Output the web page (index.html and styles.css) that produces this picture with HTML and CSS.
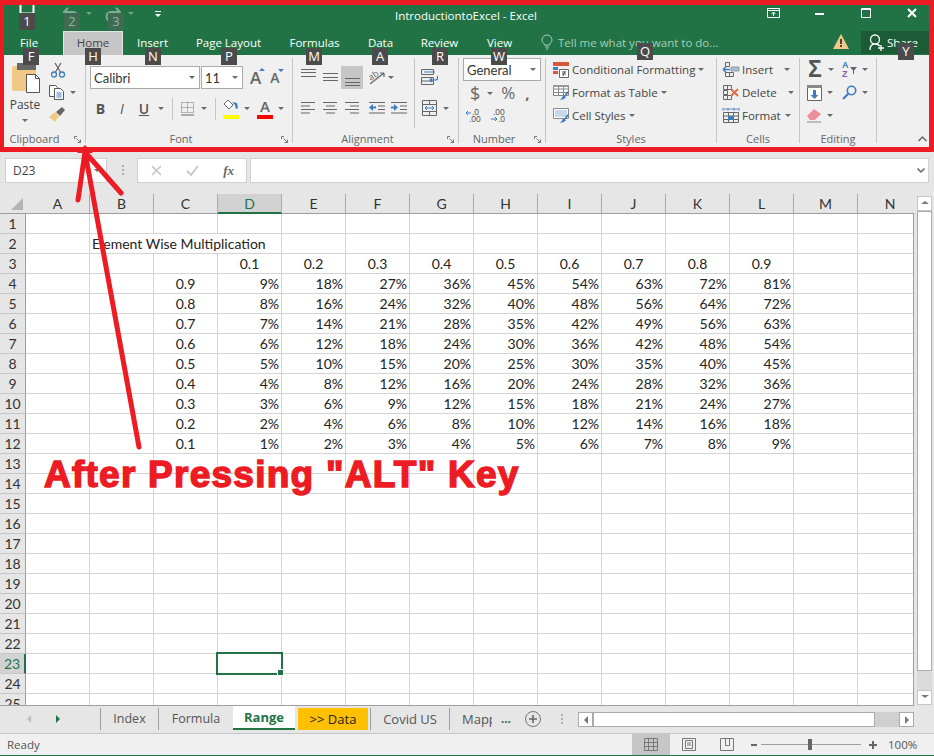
FILE: index.html
```html
<!DOCTYPE html>
<html lang="en">
<head>
	<meta charset="utf-8" />
	<title>IntroductiontoExcel - Excel</title>
	<link rel="stylesheet" href="styles.css">
</head>
<body>
<div class="window">

	<div class="titlebar">
		<div class="qat">
			<svg class="qat-save" width="16" height="10" viewBox="0 0 16 10"><path d="M1.5 0v8.5h13V0" fill="none" stroke="#fff" stroke-width="2"/></svg>
			<svg class="qat-undo" width="16" height="16" viewBox="0 0 16 16"><path d="M5 1 1 5l4 4M1.5 5H10a4.5 4.5 0 0 1 0 9H7" fill="none" stroke="#7fae95" stroke-width="2"/></svg>
			<span class="caret caret-dim"></span>
			<svg class="qat-redo" width="16" height="16" viewBox="0 0 16 16"><path d="m11 1 4 4-4 4M14.5 5H6a4.5 4.5 0 0 0 0 9h3" fill="none" stroke="#7fae95" stroke-width="2"/></svg>
			<span class="caret caret-dim"></span>
			<svg class="qat-more" width="8" height="8" viewBox="0 0 8 8"><path d="M1 1h6v1H1zM1 4h6L4 7z" fill="#fff"/></svg>
		</div>
		<div class="doc-title">IntroductiontoExcel - Excel</div>
		<div class="win-buttons">
			<svg class="win-ribbon" width="13" height="10" viewBox="0 0 13 10"><path d="M.5.5h12v9H.5zM.5 2.5h12M6.5 8V4M4.5 6l2-2 2 2" fill="none" stroke="#fff"/></svg>
			<svg class="win-min" width="9" height="2" viewBox="0 0 9 2"><path d="M0 0h9v2H0z" fill="#fff"/></svg>
			<svg class="win-max" width="10" height="10" viewBox="0 0 10 10"><path d="M.5.5h9v9h-9zM0 1.5h10" fill="none" stroke="#fff"/></svg>
			<svg class="win-close" width="10" height="10" viewBox="0 0 10 10"><path d="m1 1 8 8M9 1 1 9" fill="none" stroke="#fff" stroke-width="2"/></svg>
		</div>
	</div>

	<div class="tabbar">
		<div class="tab tab-file">File</div>
		<div class="tab tab-home">Home</div>
		<div class="tab tab-insert">Insert</div>
		<div class="tab tab-layout">Page Layout</div>
		<div class="tab tab-formulas">Formulas</div>
		<div class="tab tab-data">Data</div>
		<div class="tab tab-review">Review</div>
		<div class="tab tab-view">View</div>
		<div class="tell-me">
			<svg width="12" height="15" viewBox="0 0 12 15"><path d="M3.5 10C3 8 1 7 1 5a5 5 0 0 1 10 0c0 2-2 3-2.5 5zM4 12h4M5 14h2" fill="none" stroke="#a9cdb8"/></svg>
			<span>Tell me what you want to do...</span>
		</div>
		<svg class="warn" width="16" height="15" viewBox="0 0 16 15"><path d="M8 0 16 15H0z" fill="#f0c987"/><path d="M7 5h2v5H7zM7 11h2v2H7z" fill="#444"/></svg>
		<div class="share">
			<svg width="17" height="17" viewBox="0 0 17 17"><path d="M2 16c0-4 2-6 5-6s4 1 5 2M7 10a4 4 0 1 0 0-9 4 4 0 0 0 0 9zM10 14h6M13 11v6" fill="none" stroke="#fff" stroke-width="1.3"/></svg>
			<span>Share</span>
		</div>
	</div>

	<div class="ribbon">

		<div class="group group-clipboard">
			<div class="group-body clipboard-body">
				<div class="paste">
					<svg width="30" height="30" viewBox="0 0 30 30"><rect x="1" y="3" width="24" height="25" rx="2" fill="#f0c987"/><rect x="6" y="0" width="19" height="7" fill="#666"/><path d="M15.5 11.5h9l4 4v14h-13z" fill="#fff" stroke="#555"/><path d="M24.5 11.5v4h4" fill="none" stroke="#555"/></svg>
					<span class="paste-label">Paste</span>
					<span class="caret"></span>
				</div>
				<div class="clip-tools">
					<svg width="16" height="16" viewBox="0 0 16 16"><path d="M5 1l5.500 9M11 1 5.500 10" stroke="#666" stroke-width="1.3" fill="none"/><circle cx="4" cy="12.5" r="2.5" fill="none" stroke="#3f7cbf" stroke-width="1.3"/><circle cx="12" cy="12.5" r="2.5" fill="none" stroke="#3f7cbf" stroke-width="1.3"/></svg>
					<div class="clip-copy">
						<svg width="16" height="15" viewBox="0 0 16 15"><path d="M.5.5h6l2 2v9h-8z" fill="#fff" stroke="#555"/><path d="M5.5 3.5h6l3 3v8h-9z" fill="#fff" stroke="#555"/><path d="M7.5 8h5M7.5 10h5M7.5 12h5" stroke="#3f7cbf"/></svg>
						<span class="caret"></span>
					</div>
					<svg width="16" height="15" viewBox="0 0 16 15"><path d="M0 10 6 5l4 4-4 6z" fill="#f0c987"/><path d="m7 5 6-5 3 3-5 6z" fill="#666"/></svg>
				</div>
			</div>
			<div class="group-label">Clipboard<svg class="launcher" width="7" height="7" viewBox="0 0 7 7"><path d="M.5 3V.5H3M6.5 6.5l-4-4M6.5 3.5v3h-3" fill="none" stroke="#777"/></svg></div>
		</div>

		<div class="group group-font">
			<div class="group-body">
				<div class="font-row">
					<div class="combo combo-font">Calibri<span class="caret"></span></div>
					<div class="combo combo-size">11<span class="caret"></span></div>
					<div class="grow-a">A<i class="tri-up"></i></div>
					<div class="shrink-a">A<i class="tri-down"></i></div>
				</div>
				<div class="font-row font-row-2">
					<span class="fmt fmt-b">B</span>
					<span class="fmt fmt-i">I</span>
					<span class="fmt fmt-u">U</span>
					<span class="caret caret-u"></span>
					<span class="vsep sep-a"></span>
					<svg class="ic-border" width="13" height="14" viewBox="0 0 13 14"><path d="M.5.5h12v10H.5zM6.5.5v10M.5 5.5h12" fill="none" stroke="#777" stroke-dasharray="1 1"/><path d="M0 13h13" stroke="#666"/></svg>
					<span class="caret caret-bd"></span>
					<span class="vsep sep-b"></span>
					<div class="color-btn color-fill">
						<svg width="16" height="14" viewBox="0 0 16 14"><path d="m5 1 5 5-4 4-5-5z" fill="#fff" stroke="#666"/><path d="m9 3 5 1 1 5-2 1-1-4z" fill="#3f7cbf"/></svg>
						<i class="bar bar-yellow"></i>
					</div>
					<span class="caret caret-fill"></span>
					<div class="color-btn color-font">
						<span class="color-a">A</span>
						<i class="bar bar-red"></i>
					</div>
					<span class="caret caret-col"></span>
				</div>
			</div>
			<div class="group-label">Font<svg class="launcher" width="7" height="7" viewBox="0 0 7 7"><path d="M.5 3V.5H3M6.5 6.5l-4-4M6.5 3.5v3h-3" fill="none" stroke="#777"/></svg></div>
		</div>

		<div class="group group-align">
			<div class="group-body align-body">
				<div class="align-left">
					<div class="align-row">
						<span class="slot"><svg width="15" height="23" viewBox="0 0 15 23"><path d="M0 3.5h15M0 6.5h15M0 10.5h15" stroke="#666"/></svg></span>
						<span class="slot"><svg width="15" height="23" viewBox="0 0 15 23"><path d="M0 7.5h15M0 11.5h15M0 14.5h15" stroke="#666"/></svg></span>
						<span class="slot slot-on"><svg width="15" height="23" viewBox="0 0 15 23"><path d="M0 12.5h15M0 16.5h15M0 19.5h15" stroke="#666"/></svg></span>
						<svg class="ic-orient" width="16" height="16" viewBox="0 0 16 16"><path d="M1 14 15 3M15 3h-4M15 3v4" fill="none" stroke="#666" stroke-width="1.2"/><text x="0" y="9" class="orient-text" transform="rotate(-35 4 7)">ab</text></svg>
						<span class="caret caret-orient"></span>
					</div>
					<div class="align-row align-row-2">
						<span class="slot"><svg width="15" height="12" viewBox="0 0 15 12"><path d="M0 .5h14M0 4h9M0 7.5h14M0 11h9" stroke="#666"/></svg></span>
						<span class="slot"><svg width="15" height="12" viewBox="0 0 15 12"><path d="M0 .5h14M3 4h9M0 7.5h14M3 11h9" stroke="#666"/></svg></span>
						<span class="slot"><svg width="15" height="12" viewBox="0 0 15 12"><path d="M0 .5h14M5 4h9M0 7.5h14M5 11h9" stroke="#666"/></svg></span>
						<svg class="ic-indent" width="16" height="12" viewBox="0 0 16 12"><path d="M0 .5h16M9 4h7M9 7.5h7M0 11h16" stroke="#666"/><path d="M0 5.5 4 2v2.5h3v2H4V9z" fill="#3f7cbf"/></svg>
						<svg class="ic-indent" width="16" height="12" viewBox="0 0 16 12"><path d="M0 .5h16M9 4h7M9 7.5h7M0 11h16" stroke="#666"/><path d="M7 5.5 3 2v2.5H0v2h3V9z" fill="#3f7cbf"/></svg>
					</div>
				</div>
				<div class="align-right">
					<svg width="18" height="16" viewBox="0 0 18 16"><path d="M.5.5h12v5H.5zM.5 8.5h12v7H.5zM.5 12h12" fill="#f0f0f0" stroke="#666"/><path d="M3 3h11" stroke="#3f7cbf"/><path d="M16.5 7v2c0 1-1 2-2 2H9M11 9 9 11l2 2" fill="none" stroke="#3f7cbf" stroke-width="1.2"/></svg>
					<div class="merge">
						<svg width="15" height="16" viewBox="0 0 15 16"><path d="M.5.5h14v15H.5zM.5 4.5h14M.5 11.5h14M7.5.5v4M7.5 11.5v4" fill="none" stroke="#666"/><path d="M3 8h9M3 8l2-2M3 8l2 2M12 8l-2-2M12 8l-2 2" fill="none" stroke="#3f7cbf"/></svg>
						<span class="caret"></span>
					</div>
				</div>
			</div>
			<div class="group-label">Alignment<svg class="launcher" width="7" height="7" viewBox="0 0 7 7"><path d="M.5 3V.5H3M6.5 6.5l-4-4M6.5 3.5v3h-3" fill="none" stroke="#777"/></svg></div>
		</div>

		<div class="group group-number">
			<div class="group-body">
				<div class="combo combo-number">General<span class="caret"></span></div>
				<div class="num-row">
					<span class="num-sym num-dollar">$</span>
					<span class="caret caret-dollar"></span>
					<span class="num-sym num-pct">%</span>
					<span class="num-sym num-comma">,</span>
				</div>
				<div class="num-row num-row-3">
					<svg width="15" height="13" viewBox="0 0 15 13"><text x="6" y="6" class="dec-text">.0</text><text x="3" y="12.500" class="dec-text">.00</text><path d="M0 4h5M0 4l2-2M0 4l2 2" fill="none" stroke="#3f7cbf"/></svg>
					<svg class="dec-down" width="15" height="13" viewBox="0 0 15 13"><text x="3" y="6" class="dec-text">.00</text><text x="8" y="12.500" class="dec-text">.0</text><path d="M1 10h6M7 10 5 8M7 10l-2 2" fill="none" stroke="#3f7cbf"/></svg>
				</div>
			</div>
			<div class="group-label">Number<svg class="launcher" width="7" height="7" viewBox="0 0 7 7"><path d="M.5 3V.5H3M6.5 6.5l-4-4M6.5 3.5v3h-3" fill="none" stroke="#777"/></svg></div>
		</div>

		<div class="group group-styles">
			<div class="group-body">
				<div class="rib-row">
					<svg width="16" height="16" viewBox="0 0 16 16"><path d="M0 0h16v4H0z" fill="#d9583b"/><path d="M0 5h5v3H0z" fill="#3f7cbf"/><path d="M0 9h5v3H0z" fill="#d9583b"/><path d="M6.5 7.5h9v8h-9z" fill="#fff" stroke="#666"/><path d="M9 10h4M9 12h4M12 9l-2 5" stroke="#555" fill="none"/></svg>
					<span class="rib-text">Conditional Formatting</span><span class="caret"></span>
				</div>
				<div class="rib-row">
					<svg width="16" height="16" viewBox="0 0 16 16"><path d="M.5.5h15v10H.5zM.5 4h15M.5 7.5h15M5.5.5v10M10.5.5v10" fill="#fff" stroke="#888"/><path d="M0 0h16v2H0z" fill="#999"/><path d="M6 15c3 0 3-4 5-5l2 2c-1 2-4 3-7 3zM12 9l3-3 1 1-3 4z" fill="#3f7cbf"/></svg>
					<span class="rib-text">Format as Table</span><span class="caret"></span>
				</div>
				<div class="rib-row">
					<svg width="16" height="16" viewBox="0 0 16 16"><path d="M.5.5h15v10H.5z" fill="#fff" stroke="#888"/><path d="M2 2h12v7H2z" fill="#c9d8ea"/><path d="M6 15c3 0 3-4 5-5l2 2c-1 2-4 3-7 3zM12 9l3-3 1 1-3 4z" fill="#3f7cbf"/></svg>
					<span class="rib-text">Cell Styles</span><span class="caret"></span>
				</div>
			</div>
			<div class="group-label">Styles</div>
		</div>

		<div class="group group-cells">
			<div class="group-body">
				<div class="rib-row">
					<svg width="16" height="16" viewBox="0 0 16 16"><path d="M2.5.5h4v4h-4zM2.5 10.5h4v4h-4zM6.5 10.5h4v4h-4z" fill="none" stroke="#666"/><path d="M8 5h8v4H8z" fill="#a9c0da" stroke="#666" stroke-width=".5"/><path d="M0 7.5h7M0 7.5l3-3M0 7.5l3 3" fill="none" stroke="#3f7cbf" stroke-width="1.3"/></svg>
					<span class="rib-text">Insert</span><span class="caret caret-insert"></span>
				</div>
				<div class="rib-row">
					<svg width="16" height="16" viewBox="0 0 16 16"><path d="M.5.5h4v4h-4zM4.5.5h4v4h-4zM.5 5.5h4v4h-4zM.5 10.5h4v4h-4zM4.5 10.5h4v4h-4z" fill="none" stroke="#666"/><path d="m8 4 7 7M15 4l-7 7" stroke="#e26b4a" stroke-width="1.8"/></svg>
					<span class="rib-text">Delete</span><span class="caret caret-delete"></span>
				</div>
				<div class="rib-row">
					<svg width="16" height="16" viewBox="0 0 16 16"><path d="M0 1h16M0 0v3M16 0v3M5 0v3M11 0v3" stroke="#3f7cbf" stroke-width=".8"/><path d="M.5 4.5h15v10H.5zM.5 8h15M.5 11.5h15M5.5 4.5v10M10.5 4.5v10" fill="none" stroke="#666"/><path d="M5 8h6v4H5z" fill="#3f7cbf"/></svg>
					<span class="rib-text">Format</span><span class="caret caret-format"></span>
				</div>
			</div>
			<div class="group-label">Cells</div>
		</div>

		<div class="group group-editing">
			<div class="group-body edit-grid">
				<div class="edit-cell"><span class="sigma">Σ</span><span class="caret"></span></div>
				<div class="edit-cell"><svg width="15" height="18" viewBox="0 0 15 18"><text x="0" y="7" class="sort-a">A</text><text x="0" y="16" class="sort-z">Z</text><path d="M8 6h7l-3 3.5V13h-1V9.5z" fill="#666"/></svg><span class="caret"></span></div>
				<div class="edit-cell"><svg width="15" height="16" viewBox="0 0 15 16"><path d="M.5.5h14v15H.5z" fill="#fff" stroke="#666"/><path d="M0 0h15v3H0z" fill="#888"/><path d="M6 5h3v5h2.5l-4 4-4-4H6z" fill="#3f7cbf"/></svg><span class="caret"></span></div>
				<div class="edit-cell"><svg width="15" height="16" viewBox="0 0 15 16"><circle cx="9.5" cy="5.5" r="4.200" fill="none" stroke="#3f7cbf" stroke-width="1.6"/><path d="M6.5 8.5 1 14" stroke="#3f7cbf" stroke-width="2.2"/></svg><span class="caret"></span></div>
				<div class="edit-cell"><svg width="15" height="15" viewBox="0 0 15 15"><path d="m0 8 7-7 7 5-6 6H3z" fill="#ec8f9a"/><path d="M0 14h14" stroke="#888"/></svg><span class="caret"></span></div>
			</div>
			<div class="group-label">Editing</div>
		</div>

		<svg class="collapse" width="9" height="6" viewBox="0 0 9 6"><path d="m.5 5 4-4 4 4" fill="none" stroke="#666" stroke-width="1.5"/></svg>
	</div>

	<div class="formula-bar">
		<div class="name-box">D23<span class="caret"></span></div>
		<div class="fb-dots"></div>
		<div class="fb-buttons">
			<svg width="11" height="11" viewBox="0 0 11 11"><path d="m1 1 9 9M10 1l-9 9" stroke="#c4c4c4" stroke-width="1.5"/></svg>
			<svg width="13" height="11" viewBox="0 0 13 11"><path d="m1 6 4 4 7-9" fill="none" stroke="#c4c4c4" stroke-width="1.8"/></svg>
			<span class="fx">fx</span>
		</div>
		<div class="fb-input">
			<svg width="8" height="5" viewBox="0 0 8 5"><path d="m.5.5 3.500 3.500 3.500-3.500" fill="none" stroke="#666" stroke-width="1.5"/></svg>
		</div>
	</div>

	<div class="sheet-area">
		<div class="grid-wrap">
			<table class="grid">
				<tr class="head"><th class="corner"></th><th>A</th><th>B</th><th>C</th><th class="sel-col">D</th><th>E</th><th>F</th><th>G</th><th>H</th><th>I</th><th>J</th><th>K</th><th>L</th><th>M</th><th>N</th></tr>
				<tr><th>1</th><td></td><td></td><td></td><td></td><td></td><td></td><td></td><td></td><td></td><td></td><td></td><td></td><td></td><td></td></tr>
				<tr><th>2</th><td></td><td colspan="3" class="txt">Element Wise Multiplication</td><td></td><td></td><td></td><td></td><td></td><td></td><td></td><td></td><td></td><td></td></tr>
				<tr><th>3</th><td></td><td></td><td></td><td class="ctr">0.1</td><td class="ctr">0.2</td><td class="ctr">0.3</td><td class="ctr">0.4</td><td class="ctr">0.5</td><td class="ctr">0.6</td><td class="ctr">0.7</td><td class="ctr">0.8</td><td class="ctr">0.9</td><td></td><td></td></tr>
				<tr><th>4</th><td></td><td></td><td class="ctr">0.9</td><td>9%</td><td>18%</td><td>27%</td><td>36%</td><td>45%</td><td>54%</td><td>63%</td><td>72%</td><td>81%</td><td></td><td></td></tr>
				<tr><th>5</th><td></td><td></td><td class="ctr">0.8</td><td>8%</td><td>16%</td><td>24%</td><td>32%</td><td>40%</td><td>48%</td><td>56%</td><td>64%</td><td>72%</td><td></td><td></td></tr>
				<tr><th>6</th><td></td><td></td><td class="ctr">0.7</td><td>7%</td><td>14%</td><td>21%</td><td>28%</td><td>35%</td><td>42%</td><td>49%</td><td>56%</td><td>63%</td><td></td><td></td></tr>
				<tr><th>7</th><td></td><td></td><td class="ctr">0.6</td><td>6%</td><td>12%</td><td>18%</td><td>24%</td><td>30%</td><td>36%</td><td>42%</td><td>48%</td><td>54%</td><td></td><td></td></tr>
				<tr><th>8</th><td></td><td></td><td class="ctr">0.5</td><td>5%</td><td>10%</td><td>15%</td><td>20%</td><td>25%</td><td>30%</td><td>35%</td><td>40%</td><td>45%</td><td></td><td></td></tr>
				<tr><th>9</th><td></td><td></td><td class="ctr">0.4</td><td>4%</td><td>8%</td><td>12%</td><td>16%</td><td>20%</td><td>24%</td><td>28%</td><td>32%</td><td>36%</td><td></td><td></td></tr>
				<tr><th>10</th><td></td><td></td><td class="ctr">0.3</td><td>3%</td><td>6%</td><td>9%</td><td>12%</td><td>15%</td><td>18%</td><td>21%</td><td>24%</td><td>27%</td><td></td><td></td></tr>
				<tr><th>11</th><td></td><td></td><td class="ctr">0.2</td><td>2%</td><td>4%</td><td>6%</td><td>8%</td><td>10%</td><td>12%</td><td>14%</td><td>16%</td><td>18%</td><td></td><td></td></tr>
				<tr><th>12</th><td></td><td></td><td class="ctr">0.1</td><td>1%</td><td>2%</td><td>3%</td><td>4%</td><td>5%</td><td>6%</td><td>7%</td><td>8%</td><td>9%</td><td></td><td></td></tr>
				<tr><th>13</th><td></td><td></td><td></td><td></td><td></td><td></td><td></td><td></td><td></td><td></td><td></td><td></td><td></td><td></td></tr>
				<tr><th>14</th><td></td><td></td><td></td><td></td><td></td><td></td><td></td><td></td><td></td><td></td><td></td><td></td><td></td><td></td></tr>
				<tr><th>15</th><td></td><td></td><td></td><td></td><td></td><td></td><td></td><td></td><td></td><td></td><td></td><td></td><td></td><td></td></tr>
				<tr><th>16</th><td></td><td></td><td></td><td></td><td></td><td></td><td></td><td></td><td></td><td></td><td></td><td></td><td></td><td></td></tr>
				<tr><th>17</th><td></td><td></td><td></td><td></td><td></td><td></td><td></td><td></td><td></td><td></td><td></td><td></td><td></td><td></td></tr>
				<tr><th>18</th><td></td><td></td><td></td><td></td><td></td><td></td><td></td><td></td><td></td><td></td><td></td><td></td><td></td><td></td></tr>
				<tr><th>19</th><td></td><td></td><td></td><td></td><td></td><td></td><td></td><td></td><td></td><td></td><td></td><td></td><td></td><td></td></tr>
				<tr><th>20</th><td></td><td></td><td></td><td></td><td></td><td></td><td></td><td></td><td></td><td></td><td></td><td></td><td></td><td></td></tr>
				<tr><th>21</th><td></td><td></td><td></td><td></td><td></td><td></td><td></td><td></td><td></td><td></td><td></td><td></td><td></td><td></td></tr>
				<tr><th>22</th><td></td><td></td><td></td><td></td><td></td><td></td><td></td><td></td><td></td><td></td><td></td><td></td><td></td><td></td></tr>
				<tr><th class="sel-row">23</th><td></td><td></td><td></td><td class="sel"></td><td></td><td></td><td></td><td></td><td></td><td></td><td></td><td></td><td></td><td></td></tr>
				<tr><th>24</th><td></td><td></td><td></td><td></td><td></td><td></td><td></td><td></td><td></td><td></td><td></td><td></td><td></td><td></td></tr>
				<tr><th>25</th><td></td><td></td><td></td><td></td><td></td><td></td><td></td><td></td><td></td><td></td><td></td><td></td><td></td><td></td></tr>
			</table>
		</div>
		<div class="vscroll">
			<div class="sb-btn"><i class="tri-up tri-gray"></i></div>
			<div class="sb-thumb"></div>
			<div class="sb-track"></div>
			<div class="sb-btn"><i class="tri-down tri-gray"></i></div>
		</div>
	</div>

	<div class="sheets">
		<div class="sheet-nav">
			<i class="nav-left"></i>
			<i class="nav-right"></i>
		</div>
		<div class="sheet-tab tab-index">Index</div>
		<div class="sheet-tab tab-formula">Formula</div>
		<div class="sheet-tab tab-range">Range</div>
		<div class="sheet-tab tab-dataset">&gt;&gt; Data</div>
		<div class="sheet-tab tab-covid">Covid US</div>
		<div class="sheet-tab tab-mapp">Mapp</div>
		<div class="more-sheets">...</div>
		<svg class="add-sheet" width="16" height="16" viewBox="0 0 16 16"><circle cx="8" cy="8" r="7.5" fill="none" stroke="#777"/><path d="M8 4v8M4 8h8" stroke="#666" stroke-width="1.6"/></svg>
		<div class="sheets-dots"></div>
		<div class="hscroll">
			<div class="hs-btn"><i class="nav-left nav-gray"></i></div>
			<div class="hs-thumb"></div>
			<div class="hs-track"></div>
			<div class="hs-btn"><i class="nav-right nav-gray"></i></div>
		</div>
	</div>

	<div class="statusbar">
		<span class="ready">Ready</span>
		<div class="view-btn view-on"><svg width="14" height="13" viewBox="0 0 14 13"><path d="M.5.5h13v12H.5zM.5 4.5h13M.5 8.5h13M4.5.5v12M9.5.5v12" fill="none" stroke="#777"/></svg></div>
		<div class="view-btn"><svg width="14" height="13" viewBox="0 0 14 13"><path d="M.5.5h13v12H.5z" fill="none" stroke="#777"/><path d="M3.5 2.5h7v8h-7zM5 5h4M5 7h4" fill="none" stroke="#777"/></svg></div>
		<div class="view-btn"><svg width="14" height="13" viewBox="0 0 14 13"><path d="M.5.5h13v12H.5zM5.500.5v7h4v-7" fill="none" stroke="#777"/></svg></div>
		<div class="zoom-minus"></div>
		<div class="zoom-track"><i class="zoom-thumb"></i></div>
		<svg class="zoom-plus" width="8" height="8" viewBox="0 0 8 8"><path d="M0 3h8v2H0zM3 0h2v8H3z" fill="#666"/></svg>
		<span class="zoom-val">100%</span>
	</div>

	<!-- alt key tips -->
	<span class="keytip k-1">1</span>
	<span class="keytip k-2 dim">2</span>
	<span class="keytip k-3 dim">3</span>
	<span class="keytip k-f">F</span>
	<span class="keytip k-h">H</span>
	<span class="keytip k-n">N</span>
	<span class="keytip k-p">P</span>
	<span class="keytip k-m">M</span>
	<span class="keytip k-a">A</span>
	<span class="keytip k-r">R</span>
	<span class="keytip k-w">W</span>
	<span class="keytip k-q">Q</span>
	<span class="keytip k-y">Y</span>

	<!-- red markup drawn on top of the screenshot -->
	<div class="red-box"></div>
	<svg class="red-arrow" width="934" height="756" viewBox="0 0 934 756"><path d="M85 152 139 447M85 152 78 200M85 152 121 193" fill="none" stroke="#ed1c24" stroke-width="5" stroke-linecap="round"/><path d="M85 145 77 153h16z" fill="#ed1c24"/></svg>
	<div class="red-note">After Pressing "ALT" Key</div>
</div>
</body>
</html>
```
FILE: styles.css
```css
html, body
{
	margin: 0;
	padding: 0;
}

body
{
	width: 934px;
	height: 756px;
	overflow: hidden;
	font-family: "Open Sans", "Noto Sans", sans-serif;
	font-size: 11.5px;
	color: #444;
}

svg
{
	display: block;
	flex: none;
	overflow: visible;
}

.window
{
	position: relative;
	width: 934px;
	height: 756px;
	overflow: hidden;
	background-color: #E6E6E6;
}

.caret
{
	display: inline-block;
	flex: none;
	width: 0;
	height: 0;
	border-left: 3px solid transparent;
	border-right: 3px solid transparent;
	border-top: 3px solid #6A6A6A;
}

/* title bar */

.titlebar
{
	display: flex;
	align-items: flex-start;
	height: 29px;
	background-color: #217346;
	color: #FFF;
}

.qat
{
	display: flex;
	align-items: flex-start;
	width: 395px;
	flex: none;
}

.qat-save
{
	margin: 5px 0 0 19px;
}

.qat-undo
{
	margin: 7px 0 0 28px;
}

.qat-redo
{
	margin: 7px 0 0 13px;
}

.caret-dim
{
	margin: 12px 0 0 7px;
	border-top-color: #6FA487;
}

.qat-more
{
	margin: 10px 0 0 20px;
}

.doc-title
{
	width: 142px;
	margin-top: 7px;
	line-height: 18px;
	white-space: nowrap;
}

.win-buttons
{
	display: flex;
	align-items: flex-start;
}

.win-ribbon
{
	margin: 8px 0 0 230px;
}

.win-min
{
	margin: 13px 0 0 35px;
}

.win-max
{
	margin: 8px 0 0 37px;
}

.win-close
{
	margin: 8px 0 0 36px;
}

/* ribbon tabs */

.tabbar
{
	display: flex;
	height: 26px;
	padding-left: 4px;
	background-color: #217346;
	color: #FFF;
}

.tab
{
	flex: none;
	padding-top: 4px;
	height: 22px;
	line-height: 20px;
	text-align: center;
}

.tab-file { width: 50px; margin-right: 9px; }
.tab-insert { width: 59px; }
.tab-layout { width: 93px; }
.tab-formulas { width: 79px; }
.tab-data { width: 53px; }
.tab-review { width: 65px; }
.tab-view { width: 55px; }

.tab-home
{
	box-sizing: border-box;
	width: 60px;
	margin-top: 2px;
	height: 24px;
	padding-top: 0;
	line-height: 22px;
	color: #444;
	background-color: #C6C6C6;
	border: 1px solid #E4E4E4;
	border-bottom: 0;
}

.tell-me
{
	display: flex;
	align-items: center;
	gap: 5px;
	width: 292px;
	flex: none;
	margin-left: 14px;
	height: 26px;
	color: #A9CDB8;
}

.warn
{
	margin-top: 5px;
}

.share
{
	display: flex;
	align-items: center;
	gap: 2px;
	flex: none;
	box-sizing: border-box;
	width: 68px;
	height: 23px;
	margin: 2px 0 0 12px;
	padding-left: 7px;
	background-color: #1B5C37;
	color: #FFF;
}

/* ribbon */

.ribbon
{
	display: flex;
	height: 89px;
	padding-top: 3px;
	background-color: #F0F0F0;
}

.group
{
	position: relative;
	box-sizing: border-box;
	flex: none;
	height: 85px;
	border-right: 1px solid #C6C6C6;
}

.group-body
{
	display: flow-root;
	box-sizing: border-box;
	height: 73px;
}

.group-label
{
	position: relative;
	box-sizing: border-box;
	height: 12px;
	line-height: 16px;
	text-align: center;
	color: #666;
	font-size: 11px;
}

.launcher
{
	position: absolute;
	right: 4px;
	top: 5px;
}

.group-clipboard { width: 82px; margin-left: 4px; }
.group-font { width: 207px; }
.group-align { width: 166px; }
.group-number { width: 87px; }
.group-styles { width: 171px; }
.group-cells { width: 83px; }
.group-editing { width: 77px; }

.group-clipboard .group-label { padding-right: 20px; }
.group-font .group-label,
.group-align .group-label,
.group-number .group-label { padding-right: 16px; }

.clipboard-body
{
	display: flex;
}

.paste
{
	display: flex;
	flex-direction: column;
	align-items: center;
	width: 42px;
	flex: none;
	padding-top: 5px;
	box-sizing: border-box;
}

.paste svg
{
	margin-right: -2px;
}

.paste-label
{
	margin-top: 3px;
	line-height: 18px;
	font-size: 12px;
}

.paste .caret
{
	margin-top: 5px;
}

.clip-tools
{
	display: flex;
	flex-direction: column;
	gap: 7px;
	padding: 4px 0 0 3px;
}

.clip-copy
{
	display: flex;
	align-items: center;
	gap: 5px;
}

.clip-tools > svg:first-child
{
	margin-left: 1px;
}

/* font group */

.font-row
{
	display: flex;
	align-items: center;
	height: 23px;
	margin: 8px 0 0 4px;
}

.combo
{
	display: flex;
	align-items: center;
	justify-content: space-between;
	box-sizing: border-box;
	height: 23px;
	padding: 0 4px 0 3px;
	background-color: #FFF;
	border: 1px solid #ABABAB;
	font-family: Lato, "Liberation Sans", sans-serif;
	font-size: 13px;
	color: #333;
}

.combo-font
{
	width: 110px;
}

.combo-size
{
	width: 42px;
	margin-left: 1px;
}

.grow-a, .shrink-a
{
	position: relative;
	font-weight: 600;
	color: #666;
}

.grow-a
{
	margin-left: 7px;
	font-size: 17px;
}

.shrink-a
{
	margin-left: 9px;
	font-size: 14px;
}

.tri-up, .tri-down
{
	position: absolute;
	width: 0;
	height: 0;
	border-left: 3px solid transparent;
	border-right: 3px solid transparent;
}

.tri-up
{
	right: -4px;
	top: 2px;
	border-bottom: 3px solid #3F7CBF;
}

.tri-down
{
	right: -4px;
	top: 1px;
	border-top: 3px solid #3F7CBF;
}

.fmt
{
	flex: none;
	width: 22px;
	text-align: center;
	font-size: 14px;
	color: #555;
}

.fmt-b
{
	width: 21px;
	font-weight: 700;
}

.fmt-i
{
	font-style: italic;
}

.fmt-u
{
	font-weight: 600;
	text-decoration: underline;
}

.caret-u { margin-left: 3px; }
.caret-bd { margin-left: 7px; }
.caret-fill { margin-left: 5px; }
.caret-col { margin-left: 5px; }

.vsep
{
	flex: none;
	width: 1px;
	height: 22px;
	background-color: #C6C6C6;
}

.sep-a { margin-left: 8px; }
.sep-b { margin-left: 8px; }

.ic-border
{
	margin-left: 8px;
}

.color-btn
{
	flex: none;
	width: 16px;
	height: 20px;
	position: relative;
}

.color-fill { margin-left: 7px; }
.color-font { margin-left: 7px; }

.color-a
{
	display: block;
	text-align: center;
	line-height: 15px;
	font-size: 15px;
	font-weight: 600;
	color: #666;
}

.bar
{
	position: absolute;
	left: 0;
	bottom: 0;
	width: 16px;
	height: 4px;
}

.bar-yellow { background-color: #FFFF00; }
.bar-red { background-color: #FF0000; }

/* alignment group */

.align-body
{
	display: flex;
	padding-left: 4px;
}

.align-left
{
	box-sizing: border-box;
	width: 118px;
	height: 70px;
	border-right: 1px solid #C6C6C6;
}

.align-row
{
	display: flex;
	align-items: center;
	height: 23px;
	margin-top: 8px;
}

.align-row-2
{
	margin-top: 7px;
}

.slot
{
	display: flex;
	justify-content: center;
	align-items: center;
	width: 22px;
	height: 23px;
	flex: none;
}

.slot-on
{
	background-color: #C6C6C6;
}

.ic-orient
{
	margin-left: 6px;
}

.orient-text
{
	font-size: 9px;
	fill: #666;
}

.caret-orient
{
	margin-left: 3px;
}

.ic-indent
{
	margin-left: 6px;
}

.align-right
{
	display: flex;
	flex-direction: column;
	padding: 11px 0 0 6px;
	gap: 15px;
}

.merge
{
	display: flex;
	align-items: center;
	gap: 6px;
	margin-left: 1px;
}

/* number group */

.group-number .group-body
{
	padding-left: 4px;
}

.combo-number
{
	width: 78px;
}

.num-row
{
	display: flex;
	align-items: center;
	height: 24px;
	padding-left: 7px;
}

.num-sym
{
	font-size: 18px;
	color: #666;
	line-height: 20px;
}

.caret-dollar
{
	margin-left: 7px;
}

.num-pct
{
	margin-left: 8px;
	font-size: 17px;
}

.num-comma
{
	margin-left: 10px;
	font-weight: 700;
	font-size: 15px;
	line-height: 14px;
}

.num-row-3
{
	height: 20px;
	padding-left: 3px;
}

.dec-text
{
	font-family: "Liberation Sans", sans-serif;
	font-size: 8.5px;
	fill: #555;
}

.dec-down
{
	margin-left: 9px;
}

/* styles and cells */

.group-styles .group-body
{
	padding-left: 7px;
}

.group-cells .group-body
{
	padding-left: 6px;
}

.rib-row
{
	display: flex;
	align-items: center;
	height: 23px;
}

.rib-text
{
	margin-left: 3px;
	white-space: nowrap;
	margin-right: 3px;
}

.caret-insert { margin-left: 8px; }
.caret-delete { margin-left: 8px; }
.caret-format { margin-left: 1px; }

/* editing */

.edit-grid
{
	display: grid;
	grid-template-columns: 35px 34px;
	grid-auto-rows: 23px;
	padding-left: 7px;
}

.edit-cell
{
	display: flex;
	align-items: center;
	gap: 5px;
}

.sigma
{
	display: block;
	width: 16px;
	font-size: 23px;
	line-height: 23px;
	font-weight: 700;
	font-family: "Liberation Sans", sans-serif;
	color: #555;
	text-align: center;
}

.sort-a, .sort-z
{
	font-family: "Liberation Sans", sans-serif;
	font-size: 9px;
	font-weight: 700;
}

.sort-a { fill: #3F7CBF; }
.sort-z { fill: #8A5CB0; }

.collapse
{
	align-self: flex-end;
	margin: 0 0 5px 41px;
}

/* formula bar */

.formula-bar
{
	display: flex;
	height: 47px;
	box-sizing: border-box;
	padding: 11px 0 11px 5px;
}

.name-box, .fb-buttons, .fb-input
{
	display: flex;
	align-items: center;
	box-sizing: border-box;
	height: 25px;
	background-color: #FFF;
	border: 1px solid #D0D0D0;
}

.name-box
{
	justify-content: space-between;
	width: 102px;
	padding: 0 6px 0 7px;
	font-size: 12px;
	color: #444;
}

.fb-dots
{
	width: 2px;
	height: 11px;
	margin: 7px 13px 0 15px;
	background: repeating-linear-gradient(#B0B0B0 0 2px, transparent 2px 4px);
}

.fb-buttons
{
	justify-content: space-between;
	width: 110px;
	padding: 0 12px 0 13px;
}

.fx
{
	font-family: "Liberation Serif", serif;
	font-style: italic;
	font-weight: 700;
	font-size: 13px;
	color: #666;
}

.fb-input
{
	justify-content: flex-end;
	width: 679px;
	margin-left: 3px;
	padding-right: 3px;
}

/* sheet grid */

.sheet-area
{
	display: flex;
	height: 512px;
}

.grid-wrap
{
	position: relative;
	box-sizing: border-box;
	width: 914px;
	height: 512px;
	overflow: hidden;
	border-bottom: 1px solid #9E9E9E;
}

.grid-wrap::after
{
	content: "";
	position: absolute;
	right: 0;
	top: 19px;
	bottom: 0;
	width: 1px;
	background-color: #9E9E9E;
}

.grid
{
	table-layout: fixed;
	width: 922px;
	border-collapse: separate;
	border-spacing: 0;
	font-family: Lato, "Liberation Sans", sans-serif;
	font-size: 14px;
	color: #222;
}

.grid tr
{
	height: 20px;
}

.grid th, .grid td
{
	box-sizing: border-box;
	width: 64px;
	height: 20px;
	padding: 0 2px;
	font-weight: 400;
	white-space: nowrap;
	overflow: hidden;
}

.grid td
{
	text-align: right;
	background-color: #FFF;
	border-right: 1px solid #D4D4D4;
	border-bottom: 1px solid #D4D4D4;
	line-height: 19px;
}

.grid td.ctr
{
	text-align: center;
}

.grid td.txt
{
	text-align: left;
}

.grid th
{
	background-color: #E6E6E6;
	color: #333;
	border-right: 1px solid #ABABAB;
	border-bottom: 1px solid #C6C6C6;
	text-align: center;
}

.grid th:first-child
{
	width: 26px;
	padding: 0;
	border-right: 1px solid #9E9E9E;
}

.grid .head th
{
	border-right: 1px solid #ABABAB;
	border-bottom: 1px solid #9E9E9E;
}

.grid .head th:last-child
{
	border-right: 0;
}

.grid .head th.corner
{
	position: relative;
	border-right: 0;
}

.corner::after
{
	content: "";
	position: absolute;
	right: 3px;
	bottom: 3px;
	border-left: 12px solid transparent;
	border-bottom: 12px solid #B4B4B4;
}

.grid .head th.sel-col
{
	background-color: #D2D2D2;
	color: #217346;
	border-bottom: 2px solid #217346;
}

.grid th.sel-row
{
	background-color: #D2D2D2;
	color: #217346;
	border-right: 2px solid #217346;
}

.grid td.sel
{
	position: relative;
	overflow: visible;
}

.sel::before
{
	content: "";
	position: absolute;
	left: -2px;
	top: -2px;
	right: -2px;
	bottom: -2px;
	border: 2px solid #217346;
}

.sel::after
{
	content: "";
	position: absolute;
	right: -3px;
	bottom: -3px;
	width: 5px;
	height: 5px;
	background-color: #217346;
	border: 1px solid #FFF;
	box-sizing: content-box;
}

.vscroll
{
	display: flex;
	flex-direction: column;
	box-sizing: border-box;
	width: 15px;
	height: 509px;
	margin: 2px 0 0 3px;
}

.sb-btn
{
	position: relative;
	box-sizing: border-box;
	height: 15px;
	flex: none;
	background-color: #FFF;
	border: 1px solid #C6C6C6;
}

.tri-gray
{
	left: 3px;
	top: 4px;
	right: auto;
	border-left-width: 4px;
	border-right-width: 4px;
	border-bottom-color: #777;
	border-top-color: #777;
}

.sb-thumb
{
	box-sizing: border-box;
	height: 460px;
	flex: none;
	background-color: #FFF;
	border: 1px solid #ABABAB;
}

.sb-track
{
	flex: 1;
	background-color: #DBDBDB;
}

/* sheet tabs */

.sheets
{
	display: flex;
	align-items: flex-start;
	height: 27px;
	color: #555;
}

.sheet-nav
{
	display: flex;
	align-items: center;
	width: 100px;
	height: 25px;
	flex: none;
	box-sizing: border-box;
	padding-left: 27px;
}

.nav-left, .nav-right
{
	display: block;
	width: 0;
	height: 0;
	border-top: 4px solid transparent;
	border-bottom: 4px solid transparent;
}

.nav-left
{
	border-right: 4px solid #BDBDBD;
}

.nav-right
{
	margin-left: 25px;
	border-left: 4px solid #217346;
}

.hs-btn .nav-gray
{
	margin: 3px auto 0;
	border-right-color: #777;
	border-left-color: #777;
}

.sheet-tab
{
	flex: none;
	box-sizing: border-box;
	height: 22px;
	margin-top: 2px;
	line-height: 22px;
	text-align: center;
	white-space: nowrap;
	overflow: hidden;
	font-size: 12.5px;
	border-left: 1px solid #9E9E9E;
}

.tab-index { width: 58px; }
.tab-formula { width: 75px; }

.tab-range
{
	width: 62px;
	height: 25px;
	margin-top: -1px;
	line-height: 25px;
	font-size: 13px;
	background-color: #FFF;
	border-left: 0;
	border-bottom: 2px solid #217346;
	color: #217346;
	font-weight: 700;
}

.tab-dataset
{
	width: 70px;
	margin: 2px 2px 0 3px;
	font-size: 13px;
	background-color: #FFC000;
	border-left: 0;
	color: #222;
}

.tab-covid
{
	width: 79px;
	font-size: 13px;
}

.tab-mapp
{
	width: 43px;
	padding-left: 12px;
	text-align: left;
	font-size: 13px;
}

.more-sheets
{
	width: 10px;
	margin: 3px 0 0 9px;
	color: #217346;
	font-weight: 700;
	line-height: 20px;
	flex: none;
}

.add-sheet
{
	margin: 5px 0 0 14px;
}

.sheets-dots
{
	width: 2px;
	height: 11px;
	flex: none;
	margin: 8px 0 0 20px;
	background: repeating-linear-gradient(#B0B0B0 0 2px, transparent 2px 4px);
}

.hscroll
{
	display: flex;
	flex: none;
	box-sizing: border-box;
	width: 336px;
	height: 15px;
	margin: 6px 0 0 15px;
}

.hs-btn
{
	box-sizing: border-box;
	flex: none;
	width: 15px;
	height: 15px;
	background-color: #FFF;
	border: 1px solid #ABABAB;
}

.hs-thumb
{
	box-sizing: border-box;
	width: 282px;
	flex: none;
	background-color: #FFF;
	border: 1px solid #ABABAB;
}

.hs-track
{
	flex: 1;
	background-color: #D0D0D0;
}

/* status bar */

.statusbar
{
	display: flex;
	align-items: center;
	box-sizing: border-box;
	height: 23px;
	padding-left: 7px;
	background-color: #F0F0F0;
	border-top: 1px solid #C6C6C6;
	border-bottom: 1px solid #217346;
	color: #555;
}

.ready
{
	width: 625px;
	flex: none;
}

.view-btn
{
	display: flex;
	justify-content: center;
	align-items: center;
	width: 38px;
	height: 21px;
	flex: none;
}

.view-on
{
	background-color: #C6C6C6;
}

.zoom-minus
{
	flex: none;
	width: 6px;
	height: 2px;
	margin-left: 5px;
	background-color: #666;
}

.zoom-track
{
	position: relative;
	flex: none;
	width: 100px;
	height: 1px;
	margin-left: 4px;
	background-color: #A0A0A0;
}

.zoom-thumb
{
	position: absolute;
	left: 47px;
	top: -5px;
	width: 4px;
	height: 11px;
	background-color: #666;
}

.zoom-plus
{
	margin-left: 8px;
}

.zoom-val
{
	margin-left: 11px;
	white-space: nowrap;
}

/* key tips */

.keytip
{
	position: absolute;
	width: 16px;
	height: 17px;
	line-height: 17px;
	text-align: center;
	color: #FFF;
	background-color: #4B4B4B;
	font-size: 13px;
}

.keytip.dim
{
	color: #8FB5A1;
	background-color: #3F6B52;
}

.k-1 { left: 19px; top: 13px; }
.k-2 { left: 64px; top: 13px; }
.k-3 { left: 108px; top: 13px; }
.k-f { left: 23px; top: 48px; }
.k-h { left: 85px; top: 48px; }
.k-n { left: 145px; top: 48px; }
.k-p { left: 221px; top: 48px; }
.k-m { left: 306px; top: 48px; }
.k-a { left: 372px; top: 48px; }
.k-r { left: 432px; top: 48px; }
.k-w { left: 491px; top: 48px; }
.k-q { left: 637px; top: 43px; }
.k-y { left: 898px; top: 43px; }

/* red markup */

.red-box
{
	position: absolute;
	left: 0;
	top: 0;
	box-sizing: border-box;
	width: 934px;
	height: 152px;
	border: 5px solid #ED1C24;
	border-left-width: 4px;
}

.red-arrow
{
	position: absolute;
	left: 0;
	top: 0;
}

.red-note
{
	position: absolute;
	left: 44px;
	top: 453px;
	font-family: "Liberation Sans", sans-serif;
	font-weight: 700;
	font-size: 37px;
	line-height: 44px;
	letter-spacing: 1.25px;
	white-space: nowrap;
	color: #ED1C24;
	-webkit-text-stroke: 1.5px #ED1C24;
}
```
